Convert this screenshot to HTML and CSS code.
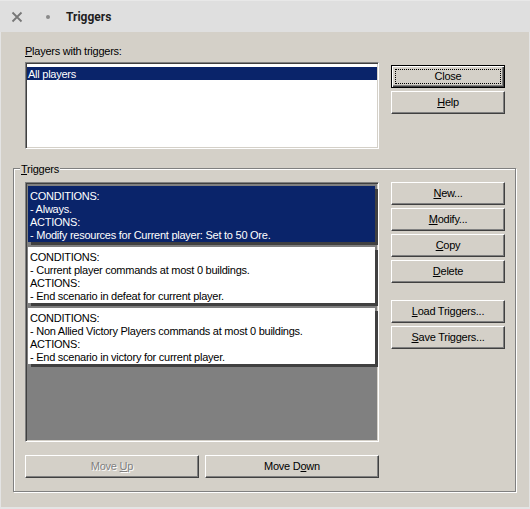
FILE: index.html
```html
<!DOCTYPE html>
<html lang="en">
<head>
    <meta charset="UTF-8">
    <title>Triggers</title>
    <link rel="stylesheet" href="styles.css">
</head>
<body>
    <div class="window">
        <header class="titlebar">
            <svg class="close-x" width="12" height="12" viewBox="0 0 12 12">
                <path d="M1.5 1.5L10.5 10.5M10.5 1.5L1.5 10.5" stroke="#777" stroke-width="1.8"/>
            </svg>
            <span class="dot"></span>
            <span class="title">Triggers</span>
        </header>

        <div class="dialog">
            <div class="top-row">
                <div class="players">
                    <div class="label"><u>P</u>layers with triggers:</div>
                    <div class="listbox">
                        <div class="row selected">All players</div>
                    </div>
                </div>
                <div class="side side-top">
                    <button class="btn default"><span class="focus">Close</span></button>
                    <button class="btn"><u>H</u>elp</button>
                </div>
            </div>

            <div class="group">
                <span class="group-label"><u>T</u>riggers</span>
                <div class="group-body">
                    <div class="trigger-col">
                        <div class="trigger-list">
                            <div class="trigger selected">
                                CONDITIONS:<br>
                                - Always.<br>
                                ACTIONS:<br>
                                - Modify resources for Current player: Set to 50 Ore.
                            </div>
                            <div class="trigger">
                                CONDITIONS:<br>
                                - Current player commands at most 0 buildings.<br>
                                ACTIONS:<br>
                                - End scenario in defeat for current player.
                            </div>
                            <div class="trigger">
                                CONDITIONS:<br>
                                - Non Allied Victory Players commands at most 0 buildings.<br>
                                ACTIONS:<br>
                                - End scenario in victory for current player.
                            </div>
                        </div>
                        <div class="move-row">
                            <button class="btn" disabled>Move <u>U</u>p</button>
                            <button class="btn">Move D<u>o</u>wn</button>
                        </div>
                    </div>
                    <div class="side">
                        <button class="btn"><u>N</u>ew...</button>
                        <button class="btn"><u>M</u>odify...</button>
                        <button class="btn"><u>C</u>opy</button>
                        <button class="btn"><u>D</u>elete</button>
                        <button class="btn spaced"><u>L</u>oad Triggers...</button>
                        <button class="btn"><u>S</u>ave Triggers...</button>
                    </div>
                </div>
            </div>
        </div>
    </div>
</body>
</html>
```

FILE: styles.css
```css
* {
    box-sizing: border-box;
    margin: 0;
    padding: 0;
}

body {
    background: #e4e4e4;
    font-family: "Liberation Sans", Arial, sans-serif;
    font-size: 11px;
    letter-spacing: -0.25px;
    color: #000;
}

.window {
    width: 530px;
    height: 509px;
}

/* title bar */
.titlebar {
    height: 32px;
    background: #dfdfdf;
    border-top: 1px solid #e8e8e8;
    display: flex;
    align-items: center;
    padding-left: 11px;
}

.close-x {
    display: block;
}

.dot {
    width: 4px;
    height: 4px;
    border-radius: 50%;
    background: #8a8a8a;
    margin-left: 23px;
}

.title {
    margin-left: 16px;
    font-family: Roboto, "Liberation Sans", sans-serif;
    font-weight: bold;
    font-size: 12px;
    letter-spacing: 0;
    color: #1e1e1e;
}

/* dialog body */
.dialog {
    width: 528px;
    height: 475px;
    margin-left: 1px;
    background: #d4d0c8;
    padding-top: 13px;
}

.top-row {
    display: flex;
    margin-left: 24px;
}

.players {
    width: 354px;
}

.label {
    line-height: 13px;
    margin-bottom: 4px;
}

.listbox {
    height: 87px;
    background: #fff;
    border: 1px solid;
    border-color: #808080 #fff #fff #808080;
    box-shadow: inset 1px 1px 0 #404040, inset -1px -1px 0 #d4d0c8;
    padding: 4px 1px 0 1px;
}

.row {
    height: 13px;
    line-height: 14px;
    padding-left: 1px;
}

.row.selected {
    background: #0a246a;
    color: #fff;
}

.side {
    width: 114px;
    margin-left: 12px;
    display: flex;
    flex-direction: column;
    gap: 3px;
}

.side-top {
    padding-top: 20px;
}

/* push buttons */
.btn {
    height: 23px;
    background: #d4d0c8;
    border: 1px solid;
    border-color: #fff #404040 #404040 #fff;
    box-shadow: inset -1px -1px 0 #808080;
    font: inherit;
    letter-spacing: inherit;
    color: #000;
    text-align: center;
    line-height: 13px;
}

.btn:disabled {
    color: #808080;
    text-shadow: 1px 1px 0 #fff;
}

.btn.default {
    position: relative;
    border: 1px solid #000;
    box-shadow: inset 1px 1px 0 #fff, inset -1px -1px 0 #404040, inset -2px -2px 0 #808080;
}

.btn.default .focus::after {
    content: "";
    position: absolute;
    left: 3px;
    top: 3px;
    right: 3px;
    bottom: 3px;
    border: 1px dotted #000;
}

.btn.spaced {
    margin-top: 14px;
}

/* triggers group */
.group {
    position: relative;
    width: 503px;
    height: 324px;
    margin: 19px 0 0 12px;
    border: 1px solid #808080;
    box-shadow: inset 1px 1px 0 #fff, 1px 1px 0 #fff;
    padding: 13px 0 0 11px;
}

.group-label {
    position: absolute;
    top: -7px;
    left: 6px;
    padding: 0 1px;
    line-height: 14px;
    background: #d4d0c8;
}

.group-body {
    display: flex;
}

.trigger-col {
    width: 354px;
}

.trigger-list {
    height: 260px;
    background: #808080;
    border: 1px solid;
    border-color: #808080 #fff #fff #808080;
    box-shadow: inset 1px 1px 0 #404040, inset -1px -1px 0 #d4d0c8;
    padding: 3px 3px 0 2px;
    display: flex;
    flex-direction: column;
    gap: 5px;
}

.trigger {
    height: 56px;
    background: #fff;
    box-shadow: 3px 3px 0 #404040;
    padding: 4px 2px 0;
    line-height: 13px;
    white-space: nowrap;
}

.trigger.selected {
    background: #0a246a;
    color: #fff;
}

.move-row {
    display: flex;
    gap: 6px;
    margin-top: 13px;
}

.move-row .btn {
    flex: 1;
}
```
